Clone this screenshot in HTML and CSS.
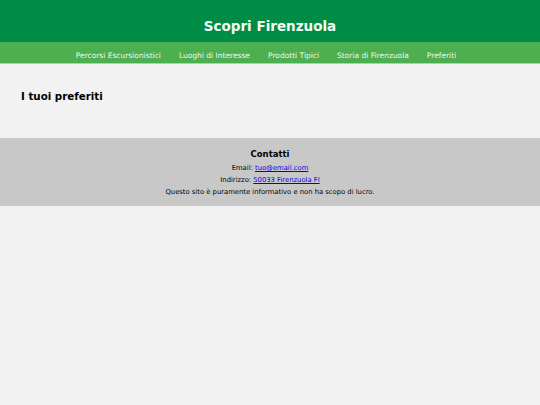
FILE: index.html
```html
<!DOCTYPE html>
<html lang="it">
<head>
<meta charset="utf-8">
<title>Scopri Firenzuola</title>
<link rel="stylesheet" href="styles.css">
</head>
<body>
<header class="site-header">
  <h1 class="site-title">Scopri Firenzuola</h1>
</header>
<nav class="main-nav">
  <ul class="nav-list">
    <li><a href="#">Percorsi Escursionistici</a></li>
    <li><a href="#">Luoghi di Interesse</a></li>
    <li><a href="#">Prodotti Tipici</a></li>
    <li><a href="#">Storia di Firenzuola</a></li>
    <li><a href="#">Preferiti</a></li>
  </ul>
</nav>
<main class="content">
  <h2 class="section-title">I tuoi preferiti</h2>
</main>
<footer class="site-footer">
  <h3 class="footer-title">Contatti</h3>
  <p class="footer-line">Email: <a href="#">tuo@email.com</a></p>
  <p class="footer-line">Indirizzo: <a href="#">50033 Firenzuola FI</a></p>
  <p class="footer-line">Questo sito è puramente informativo e non ha scopo di lucro.</p>
</footer>
</body>
</html>
```

FILE: styles.css
```css
html, body {
  margin: 0;
  padding: 0;
  background: #f2f2f2;
  font-family: "DejaVu Sans", Verdana, sans-serif;
  color: #000;
}
.site-header {
  background: #008c45;
  height: 42px;
  box-sizing: border-box;
  padding-top: 17px;
  text-align: center;
}
.site-title {
  margin: 0;
  font-size: 13.5px;
  line-height: 18px;
  font-weight: bold;
  color: #f4fff6;
}
.main-nav {
  background: #4caf50;
  height: 22px;
  border-bottom: 1px solid #a5d6a7;
  box-sizing: border-box;
}
.nav-list {
  list-style: none;
  margin: 0;
  padding: 0 8px 0 0;
  display: flex;
  justify-content: center;
  gap: 18px;
  height: 100%;
  align-items: center;
}
.nav-list a {
  color: #f1f8f1;
  text-decoration: none;
  font-size: 7.5px;
  line-height: 10px;
}
.content {
  height: 74px;
  box-sizing: border-box;
  padding: 25px 21px 0;
}
.section-title {
  margin: 0;
  font-size: 10.3px;
  line-height: 14px;
  font-weight: bold;
}
.site-footer {
  background: #c9c8c8;
  height: 68px;
  box-sizing: border-box;
  padding-top: 10px;
  text-align: center;
}
.footer-title {
  margin: 0 0 1px;
  font-size: 8.5px;
  line-height: 13px;
  font-weight: bold;
}
.footer-line {
  margin: 0;
  font-size: 6.8px;
  line-height: 12px;
}
.footer-line a {
  color: #0000ee;
}
```
